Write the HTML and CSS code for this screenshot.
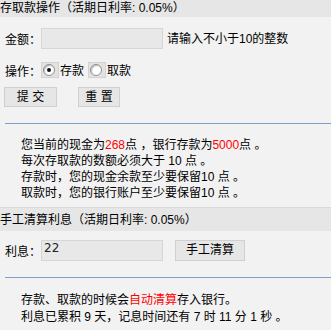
FILE: index.html
```html
<!DOCTYPE html>
<html lang="zh-CN">
<head>
  <meta charset="UTF-8">
  <title>存取款操作</title>
  <link rel="stylesheet" href="styles.css">
</head>
<body>
  <div class="hd top">存取款操作（活期日利率: 0.05%）</div>

  <div class="row first">
    <span class="lbl">金额：</span><span class="ipt"></span><span class="tip">请输入不小于10的整数</span>
  </div>
  <div class="row ops">
    <span class="lbl">操作：</span><span class="rbox"><i class="rd on"></i></span><span class="rtxt">存款</span><span class="rbox"><i class="rd"></i></span><span class="rtxt">取款</span>
  </div>
  <div class="row btns">
    <span class="btn w1">提 交</span><span class="btn w2">重 置</span>
  </div>

  <div class="info">
    <p>您当前的现金为<em>268</em>点 ，银行存款为<em>5000</em>点 。</p>
    <p>每次存取款的数额必须大于 10 点 。</p>
    <p>存款时，您的现金余款至少要保留10 点 。</p>
    <p>取款时，您的银行账户至少要保留10 点 。</p>
  </div>

  <div class="hd sec">手工清算利息（活期日利率: 0.05%）</div>

  <div class="row first2">
    <span class="lbl">利息：</span><span class="ipt">22</span><span class="btn w3">手工清算</span>
  </div>

  <div class="info info2">
    <p>存款、取款的时候会<em>自动清算</em>存入银行。</p>
    <p>利息已累积 9 天，记息时间还有 7 时 11 分 1 秒 。</p>
  </div>
</body>
</html>
```

FILE: styles.css
```css
body { margin: 0; background: #f2f2f2; color: #000; font: 12px/16px "Liberation Sans", "Noto Sans CJK SC", sans-serif; width: 331px; height: 330px; overflow: hidden; }
em { font-style: normal; color: #ff0000; }
p { margin: 0; height: 16px; line-height: 16px; white-space: nowrap; }

.hd { background: #e6e6e6; white-space: nowrap; }
.hd.top { height: 17px; line-height: 16px; }
.hd.sec { height: 23px; line-height: 25px; border-top: 1px solid #d9d9d9; margin-top: 6px; }

.row { display: flex; align-items: center; padding-left: 5px; height: 21px; white-space: nowrap; }
.row.first { margin-top: 11px; }
.row.ops { margin-top: 13px; height: 16px; }
.row.btns { margin-top: 9px; height: 20px; padding-left: 4px; }
.row.first2 { margin-top: 9px; }

.lbl { width: 36px; padding-top: 3px; }
.ipt { box-sizing: border-box; width: 122px; height: 21px; background: #e8e8e8; border: 1px solid #d6d6d6; line-height: 14px; padding-left: 2px; font-family: "DejaVu Sans", sans-serif; font-size: 12px; color: #222; }
.tip { margin-left: 4px; padding-top: 1px; }

.rbox { box-sizing: border-box; width: 18px; height: 16px; background: #e2e2e2; border: 1px solid #d2d2d2; position: relative; }
.rd { position: absolute; left: 1px; top: 1px; width: 10px; height: 10px; border-radius: 50%; background: #fff; border: 1px solid #8f8f8f; box-shadow: inset 1px 1px 1px #bbb; }
.rd.on::after { content: ""; position: absolute; left: 3px; top: 3px; width: 4px; height: 4px; border-radius: 50%; background: #111; }
.rtxt { margin: 1px 4px 0 1px; }

.btn { box-sizing: border-box; height: 20px; background: #e6e6e6; border: 1px solid #d0d0d0; text-align: center; line-height: 18px; }
.w1 { width: 53px; }
.w2 { width: 42px; margin-left: 21px; }
.w3 { width: 70px; height: 21px; line-height: 19px; margin-left: 12px; }

.info { border-top: 1px solid #7f9fca; margin: 16px 0 0 5px; padding: 13px 0 0 16px; }
.info2 { margin-top: 16px; padding-top: 14px; }
.info2 p { height: 17px; line-height: 17px; }
```
